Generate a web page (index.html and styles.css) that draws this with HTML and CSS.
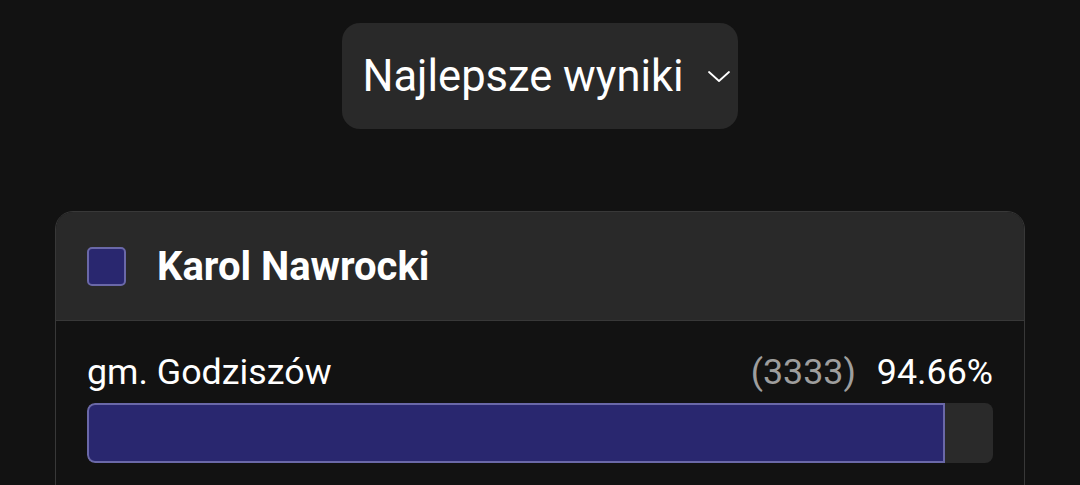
FILE: index.html
```html
<!DOCTYPE html>
<html>
    <head>
        <meta charset="UTF-8">
        <meta name="viewport" content="width=device-width, initial-scale=1.0">
        <title>Najlepsze wyniki</title>
        <link rel="stylesheet" href="styles.css">
    </head>
    <body>
        <div class="top">
            <button class="select">
                <span>Najlepsze wyniki</span>
                <svg class="chevron" width="24" height="14" viewBox="0 0 24 14">
                    <path d="M2 2 L12 11 L22 2" fill="none" stroke="#ffffff" stroke-width="1.8" stroke-linecap="round" stroke-linejoin="round"/>
                </svg>
            </button>
        </div>
        <div class="card">
            <div class="card-head">
                <div class="swatch"></div>
                <h2>Karol Nawrocki</h2>
            </div>
            <div class="card-body">
                <div class="row">
                    <span class="place">gm. Godziszów</span>
                    <span class="votes">(3333)</span>
                    <span class="pct">94.66%</span>
                </div>
                <div class="bar">
                    <div class="fill" style="width: 94.66%"></div>
                </div>
            </div>
        </div>
    </body>
</html>
```

FILE: styles.css
```css
body {
    margin: 0;
    background-color: #121212;
    color: #ffffff;
    font-family: Roboto, "Noto Sans", sans-serif;
}
.top {
    display: flex;
    justify-content: center;
    padding-top: 23px;
}
.select {
    display: flex;
    align-items: center;
    gap: 23px;
    height: 106px;
    padding: 0 7px 0 20px;
    white-space: nowrap;
    background-color: #292929;
    color: #ffffff;
    border: none;
    border-radius: 18px;
    font-family: Roboto, "Noto Sans", sans-serif;
    font-size: 43.5px;
}
.chevron {
    flex-shrink: 0;
    margin-top: 2px;
}
.card {
    margin: 82px 55px 0 55px;
    border: 1px solid #383838;
    border-radius: 18px;
    overflow: hidden;
}
.card-head {
    display: flex;
    align-items: center;
    gap: 31px;
    height: 108px;
    padding: 0 31px;
    background-color: #292929;
    border-bottom: 1px solid #383838;
}
.swatch {
    width: 35px;
    height: 35px;
    background-color: #29276f;
    border: 2px solid #6a68a8;
    border-radius: 5px;
}
.card-head h2 {
    margin: 0;
    font-size: 40px;
    font-weight: 700;
}
.card-body {
    padding: 30px 31px 40px 31px;
    background-color: #121212;
}
.row {
    display: flex;
    align-items: baseline;
    font-size: 35.8px;
}
.place {
    flex: 1;
}
.votes {
    color: #9e9e9e;
    margin-right: 21px;
}
.bar {
    margin-top: 10px;
    height: 60px;
    background-color: #2a2a2a;
    border-radius: 8px;
    overflow: hidden;
}
.fill {
    height: 100%;
    box-sizing: border-box;
    background-color: #29276f;
    border: 2px solid #6a68a8;
    border-radius: 8px 0 0 8px;
}
```
